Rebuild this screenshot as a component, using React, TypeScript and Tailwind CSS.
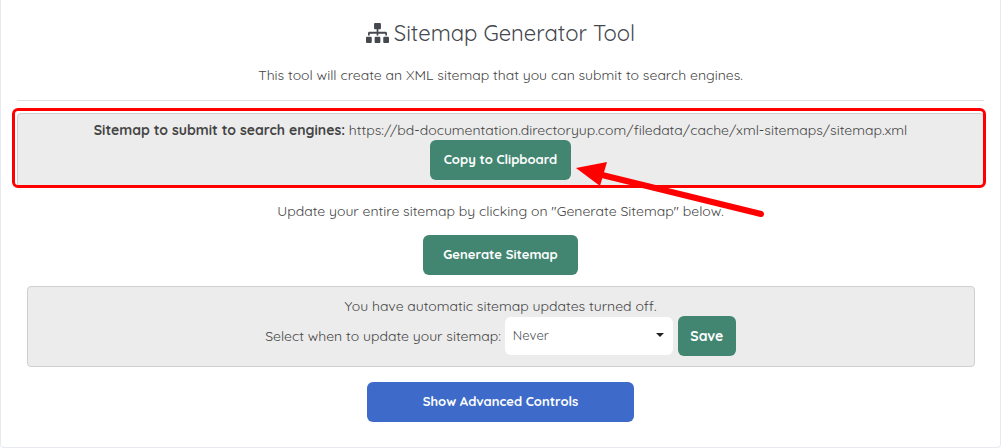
import React from "react";

function SitemapIcon() {
  return (
    <svg width="23" height="20" viewBox="0 0 640 512" fill="currentColor" preserveAspectRatio="none">
      <path d="M128 352H32c-17.67 0-32 14.33-32 32v96c0 17.67 14.33 32 32 32h96c17.67 0 32-14.33 32-32v-96c0-17.67-14.33-32-32-32zm-24-80h192v48h48v-48h192v48h48v-57.59c0-21.17-17.23-38.41-38.41-38.41H344v-64h40c17.67 0 32-14.33 32-32V32c0-17.67-14.33-32-32-32H256c-17.67 0-32 14.33-32 32v96c0 17.67 14.33 32 32 32h40v64H94.41C73.23 224 56 241.23 56 262.41V320h48v-48zm264 80h-96c-17.67 0-32 14.33-32 32v96c0 17.67 14.33 32 32 32h96c17.67 0 32-14.33 32-32v-96c0-17.67-14.33-32-32-32zm240 0h-96c-17.67 0-32 14.33-32 32v96c0 17.67 14.33 32 32 32h96c17.67 0 32-14.33 32-32v-96c0-17.67-14.33-32-32-32z" />
    </svg>
  );
}

export default function App() {
  return (
    <div className="relative h-[448px] w-[1002px] overflow-hidden bg-white font-['Quicksand','Nunito','Lato','Noto_Sans',sans-serif] text-[#444]">
      <div className="flex h-[448px] w-[1001px] flex-col items-center rounded-b border-x border-b border-[#e6e9f0] px-[16px]">
        <h1 className="mt-[18px] flex h-[30px] items-center gap-[5px] text-[22px] font-normal text-[#45484e]">
          <SitemapIcon />
          Sitemap Generator Tool
        </h1>
        <p className="mt-[17px] text-sm">This tool will create an XML sitemap that you can submit to search engines.</p>
        <div className="mt-[15px] h-px w-full shrink-0 bg-[#e0e0e0]" />
        <div className="mt-[12px] flex h-[74px] w-full shrink-0 flex-col items-center rounded-sm border border-[#cfcfcf] bg-[#ececec] pt-[6px]">
          <p className="text-sm"><strong>Sitemap to submit to search engines:</strong> https://bd-documentation.directoryup.com/filedata/cache/xml-sitemaps/sitemap.xml</p>
          <button className="h-[40px] w-[141px] rounded-md bg-[#428671] text-[13px] font-bold text-white">Copy to Clipboard</button>
        </div>
        <p className="mt-[14px] text-sm">Update your entire sitemap by clicking on "Generate Sitemap" below.</p>
        <button className="mt-[14px] h-[40px] w-[155px] shrink-0 rounded-md bg-[#428671] text-[13px] font-bold text-white">Generate Sitemap</button>
        <div className="mt-[11px] flex h-[81px] w-[948px] shrink-0 flex-col items-center rounded-sm border border-[#cfcfcf] bg-[#ececec] pt-[9px]">
          <p className="text-sm">You have automatic sitemap updates turned off.</p>
          <div className="flex items-center text-sm">
            <span>Select when to update your sitemap:</span>
            <div className="ml-[4px] flex h-[38px] w-[168px] items-center justify-between rounded-md bg-white pb-[2px] pl-[8px] pr-[9px] text-[13px] text-[#495057]">
              Never
              <span className="h-0 w-0 border-x-4 border-t-4 border-x-transparent border-t-[#222]" />
            </div>
            <button className="ml-[5px] h-[40px] w-[58px] rounded-md bg-[#428671] text-sm font-bold text-white">Save</button>
          </div>
        </div>
        <button className="mt-[15px] h-[40px] w-[267px] shrink-0 rounded-md bg-[#3e6bc9] text-[13px] font-bold text-white">Show Advanced Controls</button>
      </div>
      <div className="absolute left-[12px] top-[108px] h-[80px] w-[974px] rounded-md border-[3px] border-[#ff0000]" />
      <svg className="absolute left-0 top-0" width="1002" height="448" viewBox="0 0 1002 448">
        <path d="M761 214 L598 174" stroke="#ff0000" strokeWidth="6" strokeLinecap="round" fill="none" />
        <path d="M576 168 L607 162 L600 186 Z" fill="#ff0000" />
      </svg>
    </div>
  );
}
